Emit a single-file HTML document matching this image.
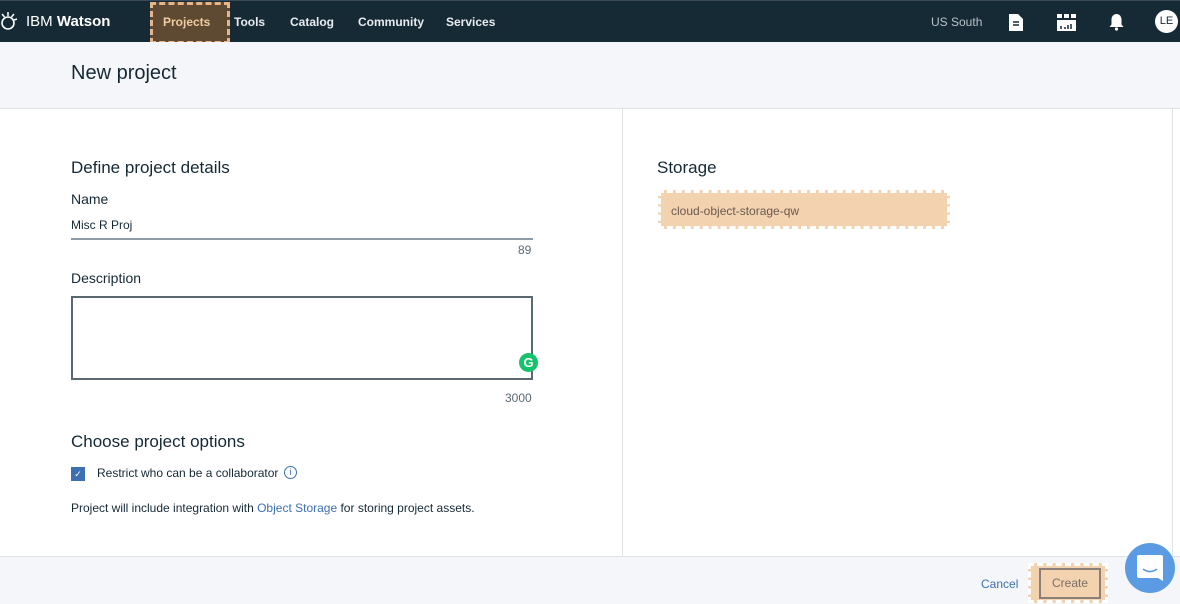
<!DOCTYPE html>
<html><head><style>
*{margin:0;padding:0;box-sizing:border-box}
body{width:1180px;height:604px;overflow:hidden;background:#fff;font-family:"Liberation Sans",sans-serif;position:relative;color:#152935}
.nav{position:absolute;left:0;top:0;width:1180px;height:42px;background:#162a36;border-top:1px solid #3b4a54}
.nav span{position:absolute;top:14px;font-size:12px;font-weight:bold;color:#e8ecef}
.hdr{position:absolute;left:0;top:42px;width:1180px;height:67px;background:#f4f6f9;border-bottom:1px solid #dfe3e6}
.hdr div{position:absolute;left:71px;top:20px;font-size:20px;color:#152935}
.right{position:absolute;left:622px;top:109px;width:551px;height:448px;border-left:1px solid #dfe3e6;border-right:1px solid #dfe3e6}
.foot{position:absolute;left:0;top:556px;width:1180px;height:48px;background:#f4f6f9;border-top:1px solid #dfe3e6}
.t{position:absolute;white-space:nowrap}
.hl{background:#f3d2b0;outline:3px dashed #fff;outline-offset:-3px}
</style></head><body>
<div class="nav">
<svg style="position:absolute;left:0;top:10px" width="18" height="20" viewBox="0 0 18 20"><circle cx="8" cy="12" r="6" fill="none" stroke="#fff" stroke-width="1.6"/><path d="M8 1v4M2 3l2.5 3M14 3l-2.5 3M17 8l-3 1" stroke="#fff" stroke-width="1.5"/></svg>
<span style="left:26px;top:12px;font-size:15px;font-weight:normal;color:#fff">IBM <b>Watson</b></span>
<div style="position:absolute;left:150px;top:1px;width:80px;height:42px;background:#5e4a32;outline:3px dashed #e8b58a;outline-offset:-3px"></div>
<span style="left:163px;color:#f1cca0">Projects</span>
<span style="left:234px">Tools</span>
<span style="left:290px">Catalog</span>
<span style="left:358px">Community</span>
<span style="left:446px">Services</span>
<span style="left:931px;font-weight:normal;color:#b9c2c8">US South</span>
<svg style="position:absolute;left:1009px;top:13px" width="14" height="17"><path d="M0 0h9l5 5v12H0z" fill="#fff"/><path d="M4 8h6M4 11h6" stroke="#162a36" stroke-width="1.4"/></svg>
<svg style="position:absolute;left:1057px;top:13px" width="20" height="17"><rect x="0" y="0" width="5" height="4" fill="#fff"/><rect x="7" y="0" width="5" height="4" fill="#fff"/><rect x="14" y="0" width="5" height="4" fill="#fff"/><rect x="0" y="6" width="19" height="11" fill="#fff"/><path d="M4 15v-3M8 15v-2M11 15v-4M14 15v-5" stroke="#162a36" stroke-width="1.5"/></svg>
<svg style="position:absolute;left:1109px;top:12px" width="15" height="18"><path d="M7.5 1c3 0 5 2.5 5 5.5v5l2 2.5H.5l2-2.5v-5C2.5 3.5 4.5 1 7.5 1z" fill="#fff"/><circle cx="7.5" cy="16" r="1.6" fill="#fff"/></svg>
<div style="position:absolute;left:1155px;top:9px;width:23px;height:23px;border-radius:50%;background:#fff;color:#162a36;font-size:11px;text-align:center;line-height:23px">LE</div>
</div>
<div class="hdr"><div>New project</div></div>
<div class="right"></div>
<div class="t" style="left:71px;top:158px;font-size:17px">Define project details</div>
<div class="t" style="left:71px;top:191px;font-size:14px">Name</div>
<div class="t" style="left:71px;top:218px;font-size:12px">Misc R Proj</div>
<div style="position:absolute;left:71px;top:238px;width:462px;height:2px;background:#8c9ba5"></div>
<div class="t" style="left:518px;top:243px;font-size:12px;color:#5a6872">89</div>
<div class="t" style="left:71px;top:270px;font-size:14px">Description</div>
<div style="position:absolute;left:71px;top:296px;width:462px;height:84px;border:2px solid #5a6872"></div>
<div style="position:absolute;left:519px;top:353px;width:19px;height:19px;border-radius:50%;background:#15c26b;color:#fff;font-size:13px;font-weight:bold;text-align:center;line-height:19px">G</div>
<div class="t" style="left:505px;top:391px;font-size:12px;color:#5a6872">3000</div>
<div class="t" style="left:71px;top:432px;font-size:17px">Choose project options</div>
<div style="position:absolute;left:71px;top:467px;width:14px;height:14px;background:#3d70b2;color:#fff;font-size:9px;text-align:center;line-height:14px">✓</div>
<div class="t" style="left:97px;top:466px;font-size:12px">Restrict who can be a collaborator</div>
<div style="position:absolute;left:284px;top:466px;width:13px;height:13px;border:1px solid #3d70b2;border-radius:50%;color:#3d70b2;font-size:9px;text-align:center;line-height:11px">i</div>
<div class="t" style="left:71px;top:501px;font-size:12px">Project will include integration with <span style="color:#3d70b2">Object Storage</span> for storing project assets.</div>
<div class="t" style="left:657px;top:158px;font-size:17px">Storage</div>
<div class="hl" style="position:absolute;left:658px;top:190px;width:292px;height:39px"></div>
<div class="t" style="left:671px;top:204px;font-size:12px;color:#6a5a4c">cloud-object-storage-qw</div>
<div class="foot"></div>
<div class="t" style="left:981px;top:577px;font-size:12px;color:#3d70b2">Cancel</div>
<div class="hl" style="position:absolute;left:1028px;top:563px;width:80px;height:40px"></div>
<div style="position:absolute;left:1039px;top:568px;width:62px;height:31px;border:2px solid #8a8078;font-size:12px;color:#7a6f66;text-align:center;line-height:27px">Create</div>
<div style="position:absolute;left:1125px;top:543px;width:50px;height:50px;border-radius:50%;background:#5a9be3"></div>
<svg style="position:absolute;left:1137px;top:555px" width="26" height="28"><path d="M2 0h22a2 2 0 0 1 2 2v24l-5-3H2a2 2 0 0 1-2-2V2a2 2 0 0 1 2-2z" fill="#fff"/><path d="M6 14q7 5 14 0" stroke="#5a9be3" stroke-width="1.6" fill="none"/></svg>
</body></html>
